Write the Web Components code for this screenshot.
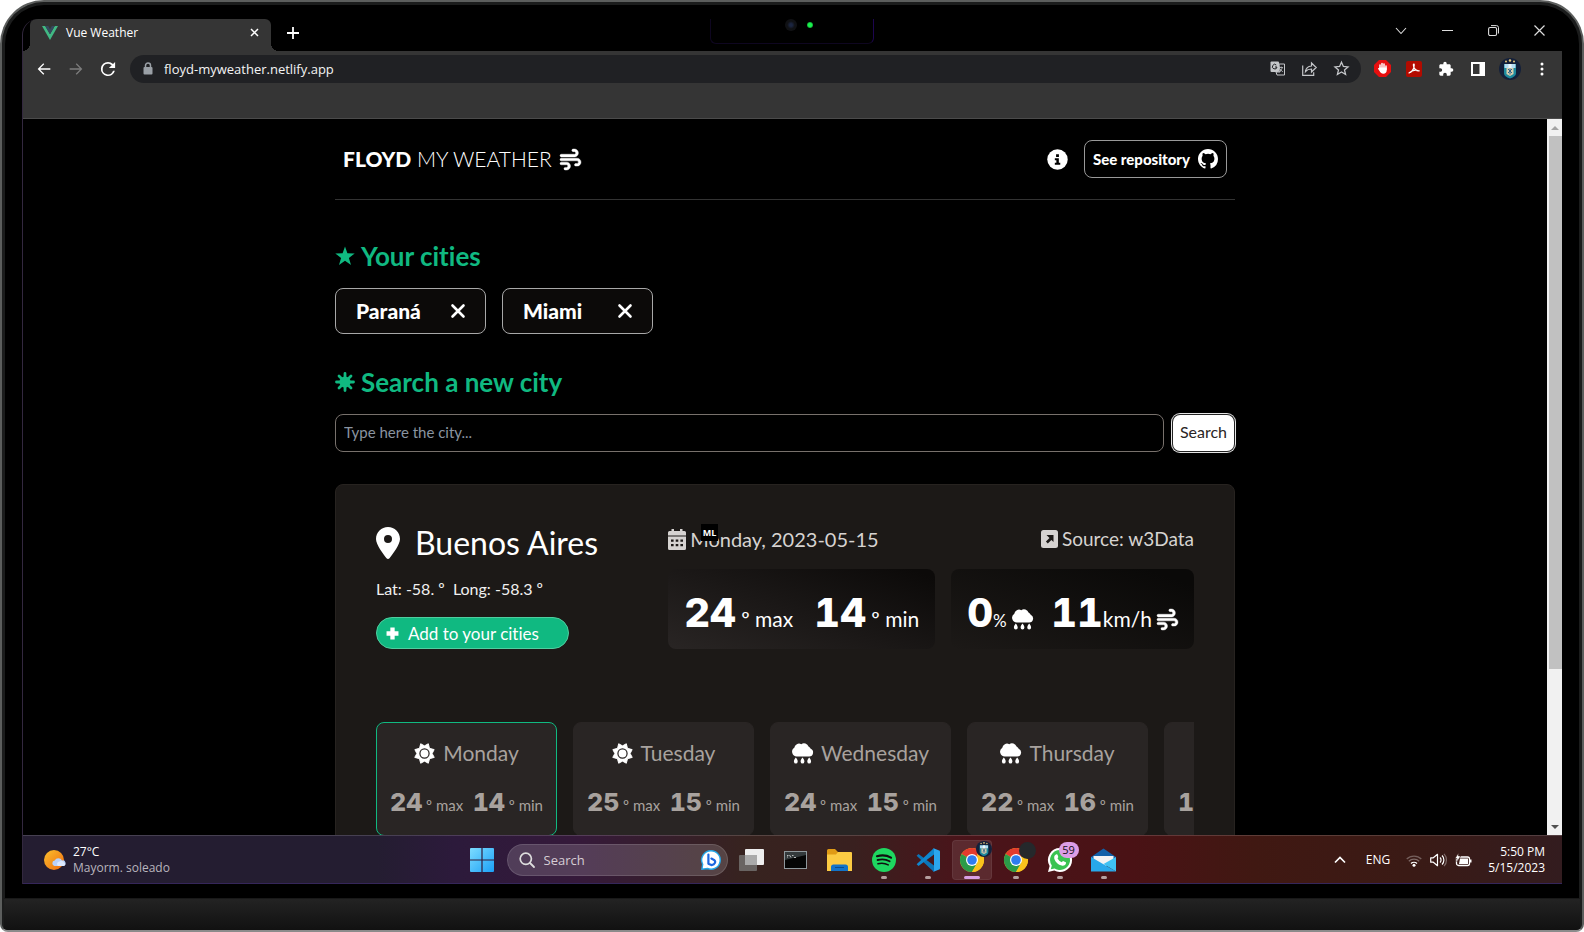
<!DOCTYPE html>
<html lang="en">
<head>
<meta charset="utf-8">
<title>Vue Weather</title>
<style>
  html, body { margin: 0; height: 100%; background: #fff; }
  body { font-family: Lato, "Open Sans", sans-serif; color: #fff; overflow: hidden; font-variant-ligatures: none; }
</style>
</head>
<body>
<laptop-frame>
  <browser-window tab-title="Vue Weather" address="floyd-myweather.netlify.app">
    <weather-page></weather-page>
  </browser-window>
  <task-bar></task-bar>
</laptop-frame>

<script>
const ICONS = {
  wind: ['0 0 512 512', '<path fill="currentColor" stroke="currentColor" stroke-width="10" d="M288 32c0 17.7 14.3 32 32 32h32c17.7 0 32 14.3 32 32s-14.3 32-32 32H32c-17.7 0-32 14.3-32 32s14.3 32 32 32H352c53 0 96-43 96-96s-43-96-96-96H320c-17.7 0-32 14.3-32 32zm64 352c0 17.7 14.3 32 32 32h32c53 0 96-43 96-96s-43-96-96-96H32c-17.7 0-32 14.3-32 32s14.3 32 32 32H416c17.7 0 32 14.3 32 32s-14.3 32-32 32H384c-17.7 0-32 14.3-32 32zM128 512h32c53 0 96-43 96-96s-43-96-96-96H32c-17.7 0-32 14.3-32 32s14.3 32 32 32H160c17.7 0 32 14.3 32 32s-14.3 32-32 32H128c-17.7 0-32 14.3-32 32s14.3 32 32 32z"/>'],
  pin: ['0 0 384 512', '<path fill="currentColor" d="M215.7 499.2C267 435 384 279.4 384 192C384 86 298 0 192 0S0 86 0 192c0 87.4 117 243 168.3 307.2c12.3 15.3 35.1 15.3 47.4 0zM192 128a64 64 0 1 1 0 128 64 64 0 1 1 0-128z"/>'],
  star: ['0 0 20 20', '<path fill="currentColor" d="M10 .4l2.4 6.9 7.3.1-5.800 4.500 2.100 7.100-6-4.200-6 4.200 2.100-7.100L.3 7.400l7.300-.1z"/>'],
  burst: ['0 0 20 20', '<g stroke="currentColor" stroke-width="2.800" stroke-linecap="round"><path d="M10 1.500v17M1.500 10h17M4 4l12 12M16 4L4 16"/></g><circle cx="10" cy="10" r="5.600" fill="currentColor"/>'],
  close: ['0 0 14 14', '<path d="M1.500 1.500l11 11M12.500 1.500l-11 11" stroke="currentColor" stroke-width="2.600" stroke-linecap="round"/>'],
  info: ['0 0 22 22', '<circle cx="11" cy="11" r="10.700" fill="currentColor"/><path fill="#000" d="M9.500 5.500h3v3h-3zM8.200 9.700h4.200v4.700h1.500v2H8.200v-2h1.600v-2.700H8.200z"/>'],
  github: ['0 0 16 16', '<path fill="currentColor" d="M8 0C3.580 0 0 3.580 0 8c0 3.540 2.290 6.530 5.470 7.590.4.070.550-.170.550-.380 0-.190-.010-.820-.010-1.490-2.010.370-2.530-.490-2.690-.940-.090-.230-.480-.940-.820-1.130-.280-.150-.680-.520-.010-.530.630-.010 1.080.580 1.230.820.720 1.210 1.870.870 2.330.660.070-.520.280-.870.510-1.070-1.780-.2-3.640-.890-3.640-3.950 0-.870.310-1.590.820-2.150-.080-.2-.360-1.020.080-2.120 0 0 .670-.210 2.200.820a7.600 7.600 0 0 1 4 0c1.530-1.040 2.200-.820 2.200-.820.440 1.100.160 1.920.080 2.120.510.560.820 1.270.820 2.150 0 3.070-1.870 3.750-3.650 3.950.290.250.540.730.540 1.480 0 1.070-.010 1.930-.010 2.200 0 .210.150.460.550.380A8.010 8.010 0 0 0 16 8c0-4.420-3.580-8-8-8z"/>'],
  plus: ['0 0 12 12', '<path fill="currentColor" d="M4 .5h4V4h3.500v4H8v3.500H4V8H.5V4H4z"/>'],
  calendar: ['0 0 18 21', '<path fill="currentColor" fill-rule="evenodd" d="M3.500 0h2.500v2h6V0h2.500v2h2A1.500 1.500 0 0 1 18 3.500V6.500H0V3.500A1.500 1.500 0 0 1 1.500 2h2zM0 7.500h18v12a1.500 1.500 0 0 1-1.500 1.500h-15A1.500 1.500 0 0 1 0 19.500zM3 10.500v2.200h2.600v-2.200zm4.700 0v2.200h2.600v-2.200zm4.700 0v2.200H15v-2.200zM3 15v2.300h2.600V15zm4.700 0v2.300h2.600V15zm4.700 0v2.300H15V15z"/>'],
  source: ['0 0 17 19', '<rect width="17" height="18" rx="2.500" fill="currentColor"/><path d="M5.500 5h7v7l-2.100-2.100-3.600 3.600-1.900-1.900 3.600-3.600z" fill="#1c1917"/>'],
  sun: ['0 0 22 22', '<path fill="currentColor" stroke="currentColor" stroke-linejoin="round" d="M11 3L15 .8l1.200 4.800 4.900 1.300L19 11l2.200 4.100-4.900 1.300-1.300 4.800L11 19l-4 2.200-1.300-4.800-4.900-1.300L3 11 .9 6.900l4.900-1.300L7 .8z"/><circle cx="11" cy="11" r="4.800" fill="#fff" stroke="#292524" stroke-width="1.300"/>'],
  rain: ['0 0 22 22', '<path fill="currentColor" d="M5 14.200a5 5 0 0 1-2.600-9.200A5 5 0 0 1 9.700 1.200a5 5 0 0 1 7.600 2.500 4.500 4.500 0 0 1 2.300 2.300A4.300 4.300 0 0 1 18 14.200zM4 15.200c1.200 1.700 2 2.800 2 4.300a2 2 0 0 1-4 0c0-1.500.8-2.600 2-4.300zM11 15.200c1.200 1.700 2 2.800 2 4.300a2 2 0 0 1-4 0c0-1.500.8-2.600 2-4.300zM18 15.200c1.200 1.700 2 2.800 2 4.300a2 2 0 0 1-4 0c0-1.500.8-2.600 2-4.300z"/>'],
  vue: ['0 0 16 14', '<path fill="#41b883" d="M0 0h3.200L8 8.300 12.800 0H16L8 13.900z"/><path fill="#35495e" d="M3.200 0h3L8 3.200 9.800 0h3L8 8.300z"/>'],
  tabclose: ['0 0 9 9', '<path d="M1 1l7 7M8 1L1 8" stroke="currentColor" stroke-width="1.500"/>'],
  newtab: ['0 0 12 12', '<path d="M6 0v12M0 6h12" stroke="currentColor" stroke-width="1.800"/>'],
  back: ['0 0 24 24', '<path fill="currentColor" d="M21.500 11H6.300l6-6L11 3.500 2.500 12l8.500 8.500 1.400-1.400L6.300 13h15.200z"/>'],
  forward: ['0 0 24 24', '<path fill="currentColor" d="M2.500 11h15.200l-6-6L13 3.500l8.500 8.500-8.500 8.500-1.400-1.400 6.100-6.100H2.500z"/>'],
  reload: ['3 3 18 18', '<path fill="currentColor" d="M17.650 6.350A7.960 7.960 0 0 0 12 4a8 8 0 1 0 7.730 10h-2.080A6 6 0 1 1 12 6c1.660 0 3.140.690 4.220 1.780L13 11h7V4z"/>'],
  lock: ['0 0 10 13', '<path d="M2.500 6V3.500a2.500 2.500 0 0 1 5 0V6" fill="none" stroke="currentColor" stroke-width="1.500"/><rect x=".5" y="5" width="9" height="7.500" rx="1" fill="currentColor"/>'],
  translate: ['0 0 15 15', '<rect x=".5" y=".5" width="8.500" height="10.500" rx="1" fill="#c4c6c9"/><path d="M6.300 4A2.300 2.300 0 1 0 7 6H5" fill="none" stroke="#202124" stroke-width="1"/><path d="M9 3h5.500v11H7l-1-3h4z" fill="none" stroke="#c4c6c9"/><path d="M9.500 6.500H13M11.200 5.500v1M12.500 6.700L9.500 11M10.300 8l2.500 3" stroke="#c4c6c9" stroke-width=".8" fill="none"/>'],
  share: ['0 0 15 14', '<g fill="none" stroke="currentColor" stroke-width="1.200"><path d="M.7 3.500v9.800h11v-3"/><path d="M3.500 9.500c.5-4 3-5.300 6-5.500V1l4.700 4.500L9.500 10V7c-2.500 0-4.500.7-6 2.500z"/></g>'],
  starline: ['0 0 15 15', '<path d="M7.500 1.200l1.900 4.300 4.600.4-3.500 3 1.100 4.600-4.100-2.500-4.100 2.500 1.100-4.600L1 5.900l4.600-.4z" fill="none" stroke="currentColor" stroke-width="1.300"/>'],
  adblock: ['0 0 17 17', '<path fill="#e60f0f" d="M5 0h7l5 5v7l-5 5H5l-5-5V5z"/><path d="M6 9V5M8 8V3.500M10 8V4M12 9.500V6" stroke="#fff" stroke-width="1.500" stroke-linecap="round"/><path fill="#fff" d="M5.200 7.500h7.500v2.700c0 2-1.200 3.500-3.400 3.500-1.800 0-2.800-.9-3.600-2.400L4 8.800c0-.8.800-.9 1.200-.3z"/>'],
  pdf: ['0 0 16 16', '<rect width="16" height="16" rx="2" fill="#b30b00"/><path d="M3 12c2-.5 5-3 5.200-7.500C8.500 2 6.900 3 7.500 5c.6 2.500 2.500 5 5.700 4.800C10 8.700 5.500 9.500 3 12z" fill="none" stroke="#fff" stroke-width="1.200" stroke-linejoin="round"/>'],
  puzzle: ['0 0 24 24', '<path fill="currentColor" d="M20.500 11H19V7c0-1.100-.9-2-2-2h-4V3.500a2.500 2.500 0 0 0-5 0V5H4c-1.100 0-1.990.9-1.990 2v3.800H3.500c1.490 0 2.700 1.210 2.700 2.700s-1.210 2.700-2.700 2.700H2V20c0 1.100.9 2 2 2h3.800v-1.500c0-1.490 1.210-2.700 2.700-2.700s2.700 1.210 2.700 2.700V22H17c1.100 0 2-.9 2-2v-4h1.500a2.500 2.500 0 0 0 0-5z"/>'],
  sidepanel: ['0 0 14 14', '<rect x="1" y="1" width="12" height="12" fill="none" stroke="currentColor" stroke-width="2"/><path fill="currentColor" d="M8.500 1H13v12H8.500z"/>'],
  crest: ['0 0 22 22', '<circle cx="11" cy="11" r="11" fill="#14203a"/><path d="M5 6h12v9c0 3-3 4.500-6 5.500C8 19.500 5 18 5 15z" fill="#1d8a9e"/><path d="M5.500 6h11v4h-11z" fill="#b5def2"/><path d="M9.500 6h3v4h-3z" fill="#eef7fb"/><path d="M7.500 10h7v6l-3.500 2-3.500-2z" fill="#d8cfae"/><path d="M9 11l4 4M13 11l-4 4M11 10.500v6" stroke="#2b618f" stroke-width="1"/><g fill="#e5c77b"><circle cx="7" cy="3.500" r="1"/><circle cx="11" cy="2.500" r="1.200"/><circle cx="15" cy="3.500" r="1"/></g>'],
  dots: ['0 0 4 14', '<g fill="currentColor"><circle cx="2" cy="2" r="1.500"/><circle cx="2" cy="7" r="1.500"/><circle cx="2" cy="12" r="1.500"/></g>'],
  chevdown: ['0 0 12 8', '<path d="M1 1l5 5.500L11 1" fill="none" stroke="currentColor" stroke-width="1.100"/>'],
  minimize: ['0 0 11 11', '<path d="M0 5.500h11" stroke="currentColor"/>'],
  restore: ['0 0 11 11', '<rect x=".6" y="2.500" width="8" height="8" rx="1.500" fill="none" stroke="currentColor" stroke-width="1.100"/><path d="M3 .6h5.500a2 2 0 0 1 2 2V8.500" fill="none" stroke="currentColor"/>'],
  winclose: ['0 0 11 11', '<path d="M.5.5l10 10M10.500.5l-10 10" stroke="currentColor" stroke-width="1.200"/>'],
  weather: ['0 0 22 22', '<defs><linearGradient id="s" x1="0" y1="0" x2="1" y2="1"><stop offset="0" stop-color="#fbc02d"/><stop offset="1" stop-color="#ee6a10"/></linearGradient></defs><circle cx="10" cy="11" r="10" fill="url(#s)"/><path fill="#b9d2fb" d="M10.500 17a2.800 2.800 0 0 1 .2-5.500A4 4 0 0 1 18 11.500a2.800 2.800 0 0 1 1.500 5.500z"/><path fill="#dce9ff" d="M14 17a2.500 2.500 0 0 1 1.500-4.500 3 3 0 0 1 4.500 1 1.900 1.900 0 0 1 0 3.500z"/>'],
  windows: ['0 0 24 24', '<defs><linearGradient id="w" x1="0" y1="0" x2="1" y2="1"><stop offset="0" stop-color="#7ddcff"/><stop offset="1" stop-color="#1ba0f7"/></linearGradient></defs><path fill="url(#w)" d="M1 0h10.400v11.400H0V1a1 1 0 0 1 1-1zM12.600 0H23a1 1 0 0 1 1 1v10.400H12.600zM0 12.600h11.400V24H1a1 1 0 0 1-1-1zM12.600 12.600H24V23a1 1 0 0 1-1 1H12.600z"/>'],
  search: ['0 0 16 16', '<circle cx="6.800" cy="6.800" r="5.600" fill="none" stroke="currentColor" stroke-width="1.700"/><path d="M11 11l4 4" stroke="currentColor" stroke-width="1.800" stroke-linecap="round"/>'],
  bing: ['0 0 20 20', '<path fill="#fff" stroke="#23a7e8" stroke-width="1.400" d="M10 .8a9.200 9.200 0 1 1-3.500 17.700L.9 19.200l.8-5A9.200 9.200 0 0 1 10 .8z"/><path d="M7.400 4.500v9.300l3 1.300c3.800-.6 4.800-3.600 2.600-5.200L10.400 8.600" fill="none" stroke="#1b66e0" stroke-width="2.200" stroke-linecap="round" stroke-linejoin="round"/>'],
  taskview: ['0 0 25 24', '<rect x="6" y="1" width="19" height="16" rx="1" fill="#eee"/><rect x="0" y="7" width="18" height="16" rx="1" fill="#6f6b69" opacity=".9"/><path d="M6 7h12v10H6z" fill="#aaa"/>'],
  terminal: ['0 0 23 18', '<rect x=".5" y=".5" width="22" height="17" fill="#050505" stroke="#8f989c"/><path d="M1 1h21v3L1 9z" fill="#343a3c"/><path d="M3 4.500h1.500M3 6h1M5.500 4l1.500 2.500M8 4.500h1.500M10 6.500h2" stroke="#ddd" stroke-width=".8"/>'],
  folder: ['0 0 25 22', '<path fill="#e09b16" d="M0 1.500A1.500 1.500 0 0 1 1.500 0H8l3 3v5H0z"/><path fill="#fccb43" d="M0 5.500L9 5.500l2-2.500h13a1 1 0 0 1 1 1v18H0z"/><path fill="#1273c9" d="M4 22v-4a2.500 2.500 0 0 1 2.500-2.500h12A2.500 2.500 0 0 1 21 18v4z"/><path d="M8 18.500h9" stroke="#0b4b8c"/>'],
  spotify: ['0 0 24 24', '<circle cx="12" cy="12" r="12" fill="#1ed760"/><g fill="none" stroke="#101010" stroke-linecap="round"><path d="M5 8.200c5-1.400 10-.9 14 1.400" stroke-width="2.200"/><path d="M5.600 12c4.300-1.200 8.500-.7 12 1.300" stroke-width="1.900"/><path d="M6 15.700c3.800-.9 7.200-.5 10.200 1.200" stroke-width="1.600"/></g>'],
  vscode: ['0 0 24 24', '<path fill="#0b75b9" d="M.6 7.800L2.500 6 18 17.500V24z"/><path fill="#0f87cf" d="M.6 16.200L2.500 18 18 6.500V0z"/><path fill="#2ba6ee" d="M17 0l5.500 2.200A1.500 1.500 0 0 1 24 4v16a1.500 1.500 0 0 1-1.500 1.800L17 24c.7-.3 1-1 1-1.500v-21c0-.7-.3-1.200-1-1.500z"/>'],
  chrome: ['0 0 24 24', '<circle cx="12" cy="12" r="12" fill="#fbc31c"/><path fill="#e33b2e" d="M12 12L1.600 6A12 12 0 0 1 22.400 6z"/><path fill="#2b9b49" d="M1.600 6A12 12 0 0 0 12 24l5.200-9L12 12z"/><path fill="#fbc31c" d="M22.400 6A12 12 0 0 1 12 24l5.200-9V6z"/><circle cx="12" cy="12" r="6" fill="#fff"/><circle cx="12" cy="12" r="4.800" fill="#2f7cf0"/>'],
  whatsapp: ['0 0 24 24', '<path fill="#fff" d="M12 0a12 12 0 1 1-5.700 22.500L0 24l1.600-6A12 12 0 0 1 12 0z"/><path fill="#3ac351" d="M12 2a10 10 0 1 1-5.400 18.400L2.800 21.300l1-3.700A10 10 0 0 1 12 2z"/><path fill="#fff" d="M8 6.500c1-.5 1.500 0 2 1.500.6 1.500 0 1.500-.5 2.300 1 2 2.300 3 4.300 4 .8-.7 1-1.500 1.700-1.100l2.300 1.100c.8.500-.3 3.700-3.300 3.400C10 17.200 5.800 12.300 6.200 9.200c.1-1.200.8-2.200 1.800-2.700z"/>'],
  mail: ['0 0 25 24', '<path fill="#1260a8" d="M0 9L12.500.5 25 9v4H0z"/><path fill="#f3f3f3" d="M2.500 8h20v6l-10 5-10-5z"/><path fill="#28a8ea" d="M0 9l25 14.500H0z"/><path fill="#3fc1f2" d="M25 9L12.500 16 25 23.500z"/>'],
  chevup: ['0 0 12 8', '<path d="M1 6.500L6 1.500l5 5" fill="none" stroke="currentColor" stroke-width="1.700"/>'],
  wifi: ['0 0 16 13', '<g fill="none" stroke="#fff" stroke-width="1.300"><path opacity=".3" d="M.7 5a10.500 10.500 0 0 1 14.600 0"/><path opacity=".35" d="M2.800 7.300a7.500 7.500 0 0 1 10.400 0"/><path d="M5 9.500a4.300 4.300 0 0 1 6 0"/></g><circle cx="8" cy="11.300" r="1.500" fill="#fff"/>'],
  volume: ['0 0 17 14', '<g fill="none" stroke="#fff" stroke-width="1.200"><path d="M.7 4.800h2.600L7.500 1.300v11.400L3.300 9.200H.7z" stroke-linejoin="round"/><path d="M10 4.500a3.500 3.500 0 0 1 0 5M12 2.500a6.300 6.300 0 0 1 0 9"/><path opacity=".35" d="M14 .8a9 9 0 0 1 0 12.400"/></g>'],
  battery: ['0 0 17 14', '<rect x="1.500" y="4" width="13" height="8.500" rx="2" fill="none" stroke="#fff" stroke-width="1.300"/><path fill="#fff" d="M5 5.500h8v5.500H4zM15 6.500h1.500v3H15z"/><path fill="#fff" stroke="#3a1b17" stroke-width=".6" d="M3.500 0v3h2.200L2 9V5.500H0z"/>']
};

const define = (name, html, setup) => {
  const template = document.createElement('template');
  template.innerHTML = html;
  customElements.define(name, class extends HTMLElement {
    connectedCallback() {
      if (this.shadowRoot) return;
      const root = this.attachShadow({ mode: 'open' });
      root.append(template.content.cloneNode(true));
      if (setup) setup(root, this);
    }
  });
};

// <ui-icon name w h>: one SVG out of the ICONS table
define('ui-icon', `<style>
  :host { display: inline-flex; flex: none; }
  svg { display: block; overflow: visible; }
</style>`, (root, el) => {
  const [box, body] = ICONS[el.getAttribute('name')];
  const w = el.getAttribute('w'), h = el.getAttribute('h') || w;
  root.innerHTML += `<svg aria-hidden="true" width="${w}" height="${h}" viewBox="${box}">${body}</svg>`;
});

define('laptop-frame', `<style>
  :host { display: flex; flex-direction: column; box-sizing: border-box; height: 100vh; background: #000;
    border: 2px solid #5c5e5d; border-bottom-color: #8b8b8b; border-radius: 44px 44px 8px 8px; overflow: hidden; position: relative;
    box-shadow: inset 0 0 0 3px #1b1c1c; }
  .screen { flex: 1; min-height: 0; display: flex; flex-direction: column; margin: 17px 20px 14px; border-left: 1px solid #33283f; border-radius: 16px 16px 0 0; overflow: hidden; }
  .base { flex: none; height: 32px; margin: 0 2px; background: linear-gradient(#232323, #111); border-top: 1px solid #191919; box-sizing: border-box; }
  .notch { position: absolute; top: 17px; left: 50%; margin-left: -82px; box-sizing: border-box; width: 164px; height: 25px; border: 1px solid #0e0620; border-right-color: #1d0550; border-top: 0; border-radius: 0 0 6px 6px; }
  .lens, .led { position: absolute; border-radius: 50%; }
  .lens { left: 74px; top: 0; width: 12px; height: 12px; background: radial-gradient(#1b2540 15%, #101114 45%); }
  .led { left: 96px; top: 3px; width: 6px; height: 6px; background: radial-gradient(#19f04d 40%, #064d16); }
</style>
<div class="screen"><slot></slot></div>
<div class="base"></div>
<div class="notch"><span class="lens"></span><span class="led"></span></div>`);

define('browser-window', `<style>
  :host { flex: 1; min-height: 0; display: flex; flex-direction: column; font-family: "Open Sans", "Noto Sans", sans-serif; color: #fff; }
  button { all: unset; display: inline-flex; align-items: center; justify-content: center; }
  .strip { display: flex; height: 32px; align-items: stretch; padding-left: 7px; }
  .tab { position: relative; display: flex; align-items: center; gap: 8px; box-sizing: border-box; width: 241px; padding: 0 12px 5px 12px; background: #353535; border-radius: 6px 6px 0 0; font-size: 12px; }
  .tab b { flex: 1; font-weight: 400; }
  .tab::before, .tab::after { content: ""; position: absolute; bottom: 0; width: 8px; height: 8px; }
  .tab::before { left: -8px; background: radial-gradient(circle at 0 0, transparent 8px, #353535 8px); }
  .tab::after { right: -8px; background: radial-gradient(circle at 100% 0, transparent 8px, #353535 8px); }
  .plus { margin-left: 16px; padding-bottom: 4px; }
  .win { display: flex; margin-left: auto; align-items: center; padding-bottom: 9px; }
  .win button { width: 46px; height: 24px; color: #ddd; }
  .bars { background: #353535; border-bottom: 1px solid #4b4b4b; height: 68px; box-sizing: border-box; }
  .row { display: flex; align-items: center; height: 35px; padding-right: 4px; }
  .nav { display: flex; padding-left: 5px; }
  .nav button, .ext button { width: 32px; height: 28px; }
  .dim { color: #7d7d7d; }
  .omni { flex: 1; display: flex; align-items: center; height: 28px; margin-left: 6px; border-radius: 14px; background: #202124; padding: 0 4px 0 13px; gap: 11px; color: #9aa0a6; }
  input { all: unset; flex: 1; min-width: 0; font-size: 13px; color: #f4f4f4; }
  .omni .acts { display: flex; color: #c4c6c9; }
  .acts button { width: 32px; height: 28px; }
  .ext { display: flex; margin-left: 5px; }
  .view { flex: 1; min-height: 0; display: flex; background: #000; }
  .content { flex: 1; min-width: 0; overflow: hidden; }
  .scroll { width: 15px; display: flex; flex-direction: column; background: #f1f1f1; }
  .scroll i { height: 17px; display: flex; align-items: center; justify-content: center; }
  .scroll i::after { content: ""; border: 4px solid transparent; }
  .up::after { border-bottom-color: #a3a3a3 !important; border-top: 0 !important; }
  .down::after { border-top-color: #505050 !important; border-bottom: 0 !important; }
  .thumb { flex: 533; margin: 0 0 0 2px; background: #c1c1c1; }
  .rest { flex: 149; }
</style>
<div class="strip">
  <div class="tab"><ui-icon name="vue" w="16" h="14"></ui-icon><b></b><button aria-label="Close tab"><ui-icon name="tabclose" w="9"></ui-icon></button></div>
  <button class="plus" aria-label="New tab"><ui-icon name="newtab" w="12"></ui-icon></button>
  <div class="win">
    <button aria-label="Tabs"><ui-icon name="chevdown" w="12" h="8"></ui-icon></button>
    <button aria-label="Minimize"><ui-icon name="minimize" w="11"></ui-icon></button>
    <button aria-label="Restore"><ui-icon name="restore" w="11"></ui-icon></button>
    <button aria-label="Close"><ui-icon name="winclose" w="11"></ui-icon></button>
  </div>
</div>
<div class="bars"><div class="row">
  <div class="nav">
    <button aria-label="Back"><ui-icon name="back" w="16"></ui-icon></button>
    <button class="dim" aria-label="Forward"><ui-icon name="forward" w="16"></ui-icon></button>
    <button aria-label="Reload"><ui-icon name="reload" w="16"></ui-icon></button>
  </div>
  <div class="omni"><ui-icon name="lock" w="10" h="13"></ui-icon><input aria-label="Address">
    <div class="acts"><button aria-label="Translate"><ui-icon name="translate" w="15"></ui-icon></button><button aria-label="Share"><ui-icon name="share" w="15" h="14"></ui-icon></button><button aria-label="Bookmark"><ui-icon name="starline" w="15"></ui-icon></button></div>
  </div>
  <div class="ext">
    <button aria-label="Ad blocker"><ui-icon name="adblock" w="17"></ui-icon></button><button aria-label="PDF"><ui-icon name="pdf" w="16"></ui-icon></button><button aria-label="Extensions"><ui-icon name="puzzle" w="16"></ui-icon></button><button aria-label="Side panel"><ui-icon name="sidepanel" w="14"></ui-icon></button><button aria-label="Profile"><ui-icon name="crest" w="22"></ui-icon></button><button aria-label="Menu"><ui-icon name="dots" w="4" h="14"></ui-icon></button>
  </div>
</div></div>
<div class="view"><div class="content"><slot></slot></div>
  <div class="scroll"><i class="up"></i><div class="thumb"></div><div class="rest"></div><i class="down"></i></div></div>`,
(root, el) => {
  root.querySelector('.tab b').textContent = el.getAttribute('tab-title');
  root.querySelector('input').value = el.getAttribute('address');
});

define('section-title', `<style>
  :host { display: block; }
  h2 { display: flex; align-items: center; gap: 6px; margin: 0; font-size: 26px; line-height: 32px; font-weight: 700; color: #10b981; }
</style><h2><slot name="icon"></slot><slot></slot></h2>`);

define('city-chip', `<style>
  :host { display: flex; align-items: center; justify-content: space-between; box-sizing: border-box; min-width: 151px; height: 46px; padding: 0 20px; border: 1px solid #a8a8a8; border-radius: 8px; background: #0c0a09; }
  button { all: unset; display: inline-flex; font-size: 21px; line-height: 28px; font-weight: 900; }
</style><button><slot></slot></button><button aria-label="Remove"><ui-icon name="close" w="14"></ui-icon></button>`);

define('temp-pair', `<style>
  :host { display: flex; align-items: baseline; justify-content: space-between; white-space: pre; font-size: var(--small, 21px); }
  b { font-family: Inter, sans-serif; font-size: var(--big, 40px); line-height: var(--line, 56px); font-weight: 800; font-variant-numeric: tabular-nums; }
</style><span><b class="hi"></b> º max</span><span><b class="lo"></b> º min</span>`, (root, el) => {
  root.querySelector('.hi').textContent = el.getAttribute('hi');
  root.querySelector('.lo').textContent = el.getAttribute('lo');
});

define('day-card', `<style>
  :host { flex: 0 0 181px; box-sizing: border-box; height: 114px; padding: 16px 13px; border: 1px solid #292524; border-radius: 8px; background: #292524; color: #a8a29e; }
  :host([active]) { border-color: #10b981; }
  .name { display: flex; justify-content: center; align-items: center; gap: 8px; font-size: 21px; line-height: 28px; margin-bottom: 17px; }
  .name ui-icon { color: #fff; }
  temp-pair { --big: 25px; --small: 15px; --line: 36px; }
</style><div class="name"></div>`, (root, el) => {
  const a = n => el.getAttribute(n);
  root.querySelector('.name').innerHTML = `<ui-icon name="${a('icon')}" w="21"></ui-icon><span>${a('day')}</span>`;
  root.querySelector('.name').insertAdjacentHTML('afterend', `<temp-pair hi="${a('hi')}" lo="${a('lo')}"></temp-pair>`);
});

define('weather-page', `<style>
  :host { display: block; font-family: Lato, "Open Sans", sans-serif; color: #fff; }
  main { max-width: 900px; margin: 0 auto; }
  header { display: flex; align-items: center; justify-content: space-between; height: 81px; box-sizing: border-box; padding: 0 8px; border-bottom: 1px solid #333; }
  .brand { display: flex; align-items: center; gap: 8px; font-size: 21px; line-height: 28px; font-weight: 300; }
  .brand b { font-weight: 900; }
  .links { display: flex; align-items: center; gap: 16px; }
  a { color: inherit; text-decoration: none; }
  button { all: unset; box-sizing: border-box; }
  .repo { display: flex; align-items: center; gap: 8px; box-sizing: border-box; height: 38px; padding: 0 8px; border: 1px solid #999; border-radius: 8px; font-size: 15px; font-weight: 900; }
  .info { display: flex; }
  section-title { margin-bottom: 16px; }
  .first { margin-top: 40px; }
  .chips { display: flex; gap: 16px; margin-bottom: 32px; }
  form { display: flex; gap: 8px; margin-bottom: 32px; }
  input { box-sizing: border-box; flex: 1; min-width: 0; height: 38px; padding: 0 8px 2px; background: #000; border: 1px solid #78716c; border-radius: 8px; font: 400 15px Lato, sans-serif; color: #fff; }
  input::placeholder { color: #8a94a1; }
  .go { height: 36px; margin: 1px; padding: 0 7px 2px; border-radius: 7px; background: #fff; color: #292524; font-size: 16px; line-height: 34px; box-shadow: 0 0 0 1px #222, 0 0 0 2px #e5e5e5; text-align: center; }
  .card { box-sizing: border-box; background: #1c1917; border: 1px solid #272320; border-radius: 8px; padding: 40px; height: 480px; }
  .top { display: grid; grid-template-columns: 5fr 9fr; margin-bottom: 73px; }
  h1 { display: flex; align-items: center; gap: 15px; margin: 0 0 16px; font-size: 32px; line-height: 36px; font-weight: 400; }
  .pos { margin: 0 0 16px; font-size: 16px; line-height: 24px; white-space: pre; color: #f0f0f0; }
  .add { display: inline-flex; align-items: center; gap: 9px; width: 193px; height: 32px; padding: 0 9px; border: 1px solid #4fce9f; border-radius: 17px; background: #10b981; font-size: 17px; }
  .meta { position: relative; display: flex; justify-content: space-between; font-size: 20px; line-height: 28px; margin-bottom: 16px; color: #d6d3d1; }
  .meta > * { display: flex; align-items: center; gap: 4px; }
  .meta a { font-size: 19px; }
  .meta .tag { position: absolute; left: 33px; top: -1px; width: 17px; height: 17px; box-sizing: border-box; justify-content: center; background: #000; color: #fff; font: 700 9px/17px "Open Sans", sans-serif; }
  .boxes { display: grid; grid-template-columns: 11fr 10fr; gap: 16px; }
  .box { height: 80px; box-sizing: border-box; padding: 16px 16px 8px; border-radius: 8px; background: linear-gradient(20deg, #292524, #0c0a09 95%); }
  .box + .box { background: linear-gradient(20deg, #1c1917, #0a0908 90%); display: flex; justify-content: space-between; }
  .box span { display: flex; align-items: baseline; font-size: 21px; }
  .box small { font-size: 17px; }
  .box b { font-family: Inter, sans-serif; font-size: 40px; line-height: 56px; font-weight: 800; font-variant-numeric: tabular-nums; }
  .box ui-icon { margin-left: 5px; position: relative; top: 3px; }
  .days { display: flex; gap: 16px; overflow-x: auto; scrollbar-width: none; }
</style>
<main>
  <header>
    <a class="brand" href="#"><span><b>FLOYD</b> MY WEATHER</span><ui-icon name="wind" w="21"></ui-icon></a>
    <div class="links"><button class="info" aria-label="Info"><ui-icon name="info" w="21"></ui-icon></button>
      <a class="repo" href="#">See repository <ui-icon name="github" w="20"></ui-icon></a></div>
  </header>
  <section-title class="first"><ui-icon slot="icon" name="star" w="20"></ui-icon>Your cities</section-title>
  <div class="chips"><city-chip>Paraná</city-chip><city-chip>Miami</city-chip></div>
  <section-title><ui-icon slot="icon" name="burst" w="20"></ui-icon>Search a new city</section-title>
  <form onsubmit="return false"><input aria-label="City" placeholder="Type here the city..."><button class="go">Search</button></form>
  <section class="card">
    <div class="top">
      <div>
        <h1><ui-icon name="pin" w="24" h="32"></ui-icon>Buenos Aires</h1>
        <p class="pos">Lat: -58. º  Long: -58.3 º</p>
        <button class="add"><ui-icon name="plus" w="13"></ui-icon>Add to your cities</button>
      </div>
      <div>
        <div class="meta"><span><ui-icon name="calendar" w="18" h="21"></ui-icon>Monday, 2023-05-15</span>
          <a href="#"><ui-icon name="source" w="17" h="19"></ui-icon>Source: w3Data</a><span class="tag">ML</span></div>
        <div class="boxes">
          <div class="box"><temp-pair hi="24" lo="14"></temp-pair></div>
          <div class="box"><span><b>0</b><small>%</small><ui-icon name="rain" w="21"></ui-icon></span><span><b>11</b>km/h<ui-icon name="wind" w="21"></ui-icon></span></div>
        </div>
      </div>
    </div>
    <div class="days">
      <day-card active icon="sun" day="Monday" hi="24" lo="14"></day-card>
      <day-card icon="sun" day="Tuesday" hi="25" lo="15"></day-card>
      <day-card icon="rain" day="Wednesday" hi="24" lo="15"></day-card>
      <day-card icon="rain" day="Thursday" hi="22" lo="16"></day-card>
      <day-card icon="rain" day="Friday" hi="19" lo="14"></day-card>
    </div>
  </section>
</main>`);

define('task-app', `<style>
  :host { position: relative; display: flex; width: 44px; height: 48px; align-items: center; justify-content: center; }
  button { all: unset; display: flex; align-items: center; justify-content: center; width: 38px; height: 38px; border: 1px solid transparent; border-radius: 4px; }
  :host([active]) button { background: #ffffff18; border-color: #ffffff10; }
  .run { position: absolute; left: 50%; bottom: 5px; width: 6px; height: 3px; margin-left: -3px; border-radius: 2px; background: #b59f9f; display: none; }
  :host([running]) .run { display: block; }
  :host([active]) .run { width: 16px; margin-left: -8px; background: #d9a0e4; }
  ::slotted(*) { position: absolute; }
</style><button></button><span class="run"></span><slot></slot>`, (root, el) => {
  const b = root.querySelector('button');
  b.setAttribute('aria-label', el.getAttribute('icon'));
  b.innerHTML = `<ui-icon name="${el.getAttribute('icon')}" w="${el.getAttribute('w') || 24}" h="${el.getAttribute('h') || 24}"></ui-icon>`;
});

define('task-bar', `<style>
  :host { flex: none; display: grid; grid-template-columns: 1fr auto 1fr; align-items: center; box-sizing: border-box; height: 49px; border-top: 1px solid #ffffff28; border-bottom: 1px solid #35265a;
    background: linear-gradient(90deg, #241d31 0 23%, #2c1a3b 28%, #35193a 36%, #37231f 47%, #39201f 54%, #4a141a 61%, #4a1215 72%, #401812 80%, #3a1a15 90%, #331c1f);
    font-family: "Open Sans", "Noto Sans", sans-serif; font-size: 12px; line-height: 16px; color: #fff; }
  .widget { display: flex; align-items: center; gap: 7px; padding-left: 21px; }
  .widget span { color: #b9b5bd; } .widget b { display: block; font-weight: 400; color: #fff; }
  .mid { display: flex; align-items: center; }
  .find { display: flex; align-items: center; box-sizing: border-box; width: 221px; height: 32px; margin: 0 2px 0 3px; padding: 0 6px 0 11px; gap: 9px; border: 1px solid #ffffff20; border-radius: 16px; background: #ffffff28; color: #ddd; }
  input { all: unset; flex: 1; min-width: 0; font-size: 13px; } input::placeholder { color: #d6ccd4; }
  .pic { right: 2px; top: 5px; } .dot { right: 2px; top: 6px; width: 17px; height: 17px; border-radius: 50%; background: #25282b; }
  .badge { left: 21px; top: 6px; width: 20px; height: 16px; border-radius: 8px; background: #dc9ee6; color: #111; text-align: center; font-size: 11px; }
  .tray { display: flex; align-items: center; justify-content: flex-end; padding-right: 17px; }
  .tray .lang { margin: 0 16px 0 20px; } .tray ui-icon + ui-icon { margin-left: 8px; }
  time { text-align: right; margin-left: 16px; }
</style>
<div class="widget"><ui-icon name="weather" w="22"></ui-icon><span><b>27°C</b>Mayorm. soleado</span></div>
<div class="mid">
  <task-app icon="windows"></task-app>
  <label class="find"><ui-icon name="search" w="16"></ui-icon><input placeholder="Search" aria-label="Search"><ui-icon name="bing" w="20"></ui-icon></label>
  <task-app icon="taskview" w="25"></task-app>
  <task-app icon="terminal" w="23" h="18"></task-app>
  <task-app icon="folder" w="25" h="22"></task-app>
  <task-app icon="spotify" running></task-app>
  <task-app icon="vscode" running></task-app>
  <task-app icon="chrome" active running><ui-icon class="pic" name="crest" w="16"></ui-icon></task-app>
  <task-app icon="chrome" running><span class="dot"></span></task-app>
  <task-app icon="whatsapp" running><span class="badge">59</span></task-app>
  <task-app icon="mail" w="25" running></task-app>
</div>
<div class="tray"><ui-icon name="chevup" w="12" h="8"></ui-icon><span class="lang">ENG</span>
  <ui-icon name="wifi" w="16" h="13"></ui-icon><ui-icon name="volume" w="17" h="14"></ui-icon><ui-icon name="battery" w="17" h="14"></ui-icon>
  <time>5:50 PM<br>5/15/2023</time></div>`);
</script>
</body>
</html>
